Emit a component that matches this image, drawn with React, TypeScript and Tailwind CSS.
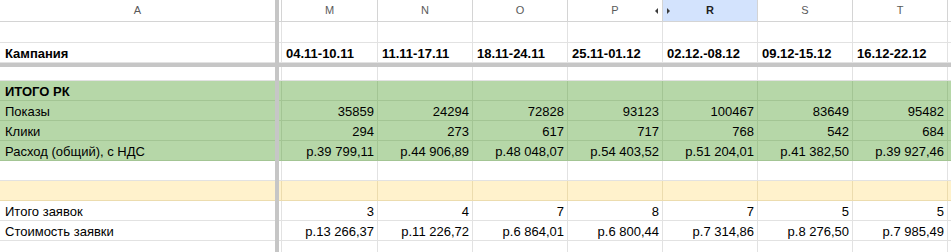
import React from "react";

type Col = {
  l: string;
  w: string;
  date: string;
  pok: string;
  kl: string;
  ras: string;
  zay: string;
  st: string;
};

const cols: Col[] = [
  { l: "M", w: "w-[96px]", date: "04.11-10.11", pok: "35859", kl: "294", ras: "р.39 799,11", zay: "3", st: "р.13 266,37" },
  { l: "N", w: "w-[95px]", date: "11.11-17.11", pok: "24294", kl: "273", ras: "р.44 906,89", zay: "4", st: "р.11 226,72" },
  { l: "O", w: "w-[95px]", date: "18.11-24.11", pok: "72828", kl: "617", ras: "р.48 048,07", zay: "7", st: "р.6 864,01" },
  { l: "P", w: "w-[95px]", date: "25.11-01.12", pok: "93123", kl: "717", ras: "р.54 403,52", zay: "8", st: "р.6 800,44" },
  { l: "R", w: "w-[95px]", date: "02.12.-08.12", pok: "100467", kl: "768", ras: "р.51 204,01", zay: "7", st: "р.7 314,86" },
  { l: "S", w: "w-[95px]", date: "09.12-15.12", pok: "83649", kl: "542", ras: "р.41 382,50", zay: "5", st: "р.8 276,50" },
  { l: "T", w: "w-[95px]", date: "16.12-22.12", pok: "95482", kl: "684", ras: "р.39 927,46", zay: "5", st: "р.7 985,49" },
];

type Kind = "white" | "green" | "yellow";

const bg: Record<Kind, string> = {
  white: "bg-white",
  green: "bg-[#b6d7a8]",
  yellow: "bg-[#fff2cc]",
};
const bd: Record<Kind, string> = {
  white: "border-[#e2e2e2]",
  green: "border-[#a3c594]",
  yellow: "border-[#ecdcae]",
};

function Bar() {
  return <div className="w-[4px] shrink-0 bg-[#c6c6c6]" />;
}

function Row({
  kind,
  h,
  label,
  bold,
  values,
  left,
}: {
  kind: Kind;
  h: string;
  label?: string;
  bold?: boolean;
  values?: string[];
  left?: boolean;
}) {
  const txt = `${bold ? "font-bold" : ""} text-[13px]`;
  return (
    <div className={`flex ${h} ${bg[kind]}`}>
      <div
        className={`w-[275px] shrink-0 border-b ${bd[kind]} flex items-end pl-[5px] pb-[1px] leading-[15px] ${txt} text-black`}
      >
        {label}
      </div>
      <Bar />
      <div className={`w-[3px] shrink-0 border-b border-r ${bd[kind]}`} />
      {cols.map((c, i) => (
        <div
          key={c.l}
          className={`${c.w} shrink-0 border-b border-r ${bd[kind]} flex items-end ${
            left ? "justify-start pl-[4px]" : "justify-end pr-[3px]"
          } pb-[1px] leading-[15px] ${txt} text-black whitespace-nowrap overflow-hidden`}
        >
          {values ? values[i] : ""}
        </div>
      ))}
      <div className={`flex-1 border-b ${bd[kind]}`} />
    </div>
  );
}

export default function App() {
  return (
    <div
      className="w-[951px] h-[252px] overflow-hidden bg-white"
      style={{ fontFamily: '"Liberation Sans", Arial, sans-serif' }}
    >
      {/* column header row */}
      <div className="flex h-[22px] bg-white text-[11px] text-[#5a5a5a]">
        <div className="w-[275px] shrink-0 border-b border-[#d4d4d4] flex items-center justify-center">
          A
        </div>
        <Bar />
        <div className="w-[3px] shrink-0 border-b border-r border-[#d4d4d4]" />
        {cols.map((c) => (
          <div
            key={c.l}
            className={`${c.w} shrink-0 relative border-b border-r border-[#d4d4d4] flex items-center justify-center ${
              c.l === "R" ? "bg-[#d3e3fd] font-bold text-[#1f1f1f]" : ""
            }`}
          >
            {c.l}
            {c.l === "P" && (
              <svg className="absolute right-[4px] top-[8px]" width="3" height="6" viewBox="0 0 3 6">
                <polygon points="3,0 0,3 3,6" fill="#3c3c3c" />
              </svg>
            )}
            {c.l === "R" && (
              <svg className="absolute left-[4px] top-[8px]" width="3" height="6" viewBox="0 0 3 6">
                <polygon points="0,0 3,3 0,6" fill="#3c3c3c" />
              </svg>
            )}
          </div>
        ))}
        <div className="flex-1 border-b border-[#d4d4d4]" />
      </div>

      <Row kind="white" h="h-[21px]" />
      <Row
        kind="white"
        h="h-[20px]"
        label="Кампания"
        bold
        left
        values={cols.map((c) => c.date)}
      />
      {/* frozen horizontal bar */}
      <div className="h-[4px] bg-[#c6c6c6]" />
      <Row kind="white" h="h-[14px]" />

      <Row kind="green" h="h-[20px]" label="ИТОГО РК" bold />
      <Row kind="green" h="h-[20px]" label="Показы" values={cols.map((c) => c.pok)} />
      <Row kind="green" h="h-[20px]" label="Клики" values={cols.map((c) => c.kl)} />
      <Row kind="green" h="h-[20px]" label="Расход (общий), с НДС" values={cols.map((c) => c.ras)} />
      <Row kind="white" h="h-[20px]" />
      <Row kind="yellow" h="h-[20px]" />
      <Row kind="white" h="h-[20px]" label="Итого заявок" values={cols.map((c) => c.zay)} />
      <Row kind="white" h="h-[20px]" label="Стоимость заявки" values={cols.map((c) => c.st)} />
      <Row kind="white" h="h-[20px]" />
    </div>
  );
}
